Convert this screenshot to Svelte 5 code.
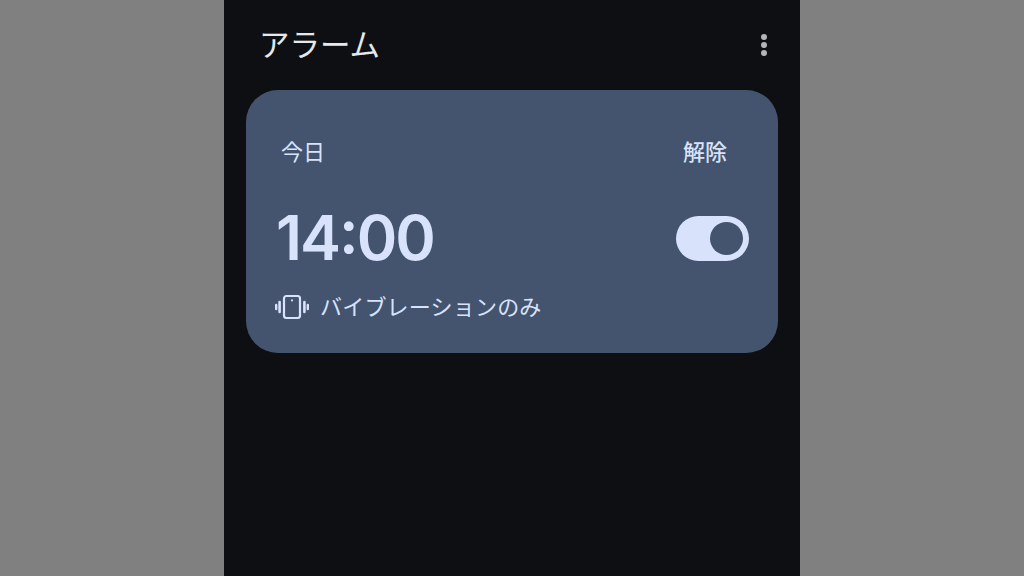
<script>
  let enabled = $state(true)
</script>

<div class="stage">
  <main class="phone">
    <header>
      <h1>アラーム</h1>
      <button class="more" aria-label="その他">
        <span></span><span></span><span></span>
      </button>
    </header>

    <section class="card">
      <div class="row top">
        <span class="day">今日</span>
        <button class="dismiss">解除</button>
      </div>
      <div class="row middle">
        <span class="time">14:00</span>
        <button
          class="toggle"
          class:on={enabled}
          role="switch"
          aria-checked={enabled}
          aria-label="アラーム 14:00"
          onclick={() => (enabled = !enabled)}
        ><span class="knob"></span></button>
      </div>
      <div class="sound">
        <svg viewBox="0 0 34 26" width="34" height="26" fill="none" stroke="currentColor" stroke-linecap="round">
          <rect x="9" y="2" width="16" height="22" rx="2.4" stroke-width="2.2" />
          <path d="M17 6.2v.3" stroke-width="2" />
          <path d="M4.6 8v10M29.4 8v10" stroke-width="2.6" />
          <path d="M1.2 11v4M32.8 11v4" stroke-width="2.4" />
        </svg>
        <span>バイブレーションのみ</span>
      </div>
    </section>
  </main>
</div>

<style>
  :global(body) {
    margin: 0;
    background: #808080;
    font-family: Roboto, "Noto Sans CJK JP", sans-serif;
  }
  .stage {
    display: flex;
    justify-content: center;
    height: 576px;
    overflow: hidden;
  }
  .phone {
    width: 576px;
    background: #0d0f13;
  }
  header {
    height: 90px;
    box-sizing: border-box;
    display: flex;
    align-items: center;
    justify-content: space-between;
    padding: 0 33px 0 35px;
  }
  h1 {
    margin: 0 0 4px;
    font-size: 30.5px;
    font-weight: 400;
    color: #e6e8ec;
    font-family: "Noto Sans CJK JP", sans-serif;
  }
  button {
    border: 0;
    padding: 0;
    background: none;
    font: inherit;
    color: inherit;
  }
  .more {
    display: flex;
    flex-direction: column;
    gap: 2.4px;
    width: 6px;
  }
  .more span {
    width: 6px;
    height: 6px;
    border-radius: 50%;
    background: #b4b5b8;
  }
  .card {
    margin: 0 22px;
    height: 263px;
    box-sizing: border-box;
    padding: 42px 29px 0 29px;
    border-radius: 32px;
    background: #44546f;
    color: #d8e3fb;
  }
  .row {
    display: flex;
    align-items: center;
    justify-content: space-between;
  }
  .top {
    height: 36px;
    padding: 0 22px 0 6px;
  }
  .day, .dismiss {
    font-size: 22px;
    font-family: "Noto Sans CJK JP", sans-serif;
  }
  .dismiss {
    font-weight: 500;
  }
  .middle {
    margin-top: 39px;
    height: 62px;
  }
  .time {
    font-family: Inter, sans-serif;
    font-size: 61.5px;
    font-weight: 600;
    line-height: 62px;
    letter-spacing: -1.95px;
    font-feature-settings: "case", "calt";
    margin-left: 1px;
  }
  .toggle {
    width: 73px;
    height: 45px;
    border-radius: 23px;
    background: #d8e3fb;
    display: flex;
    align-items: center;
    justify-content: flex-start;
    padding: 0 6px;
    box-sizing: border-box;
  }
  .toggle.on {
    justify-content: flex-end;
  }
  .knob {
    width: 33px;
    height: 33px;
    border-radius: 50%;
    background: #44546f;
  }
  .sound {
    margin-top: 19px;
    display: flex;
    align-items: center;
    gap: 11px;
    font-size: 22px;
    letter-spacing: 0.2px;
    font-family: "Noto Sans CJK JP", sans-serif;
    height: 34px;
  }
  .sound svg {
    margin-top: 4px;
  }
</style>
